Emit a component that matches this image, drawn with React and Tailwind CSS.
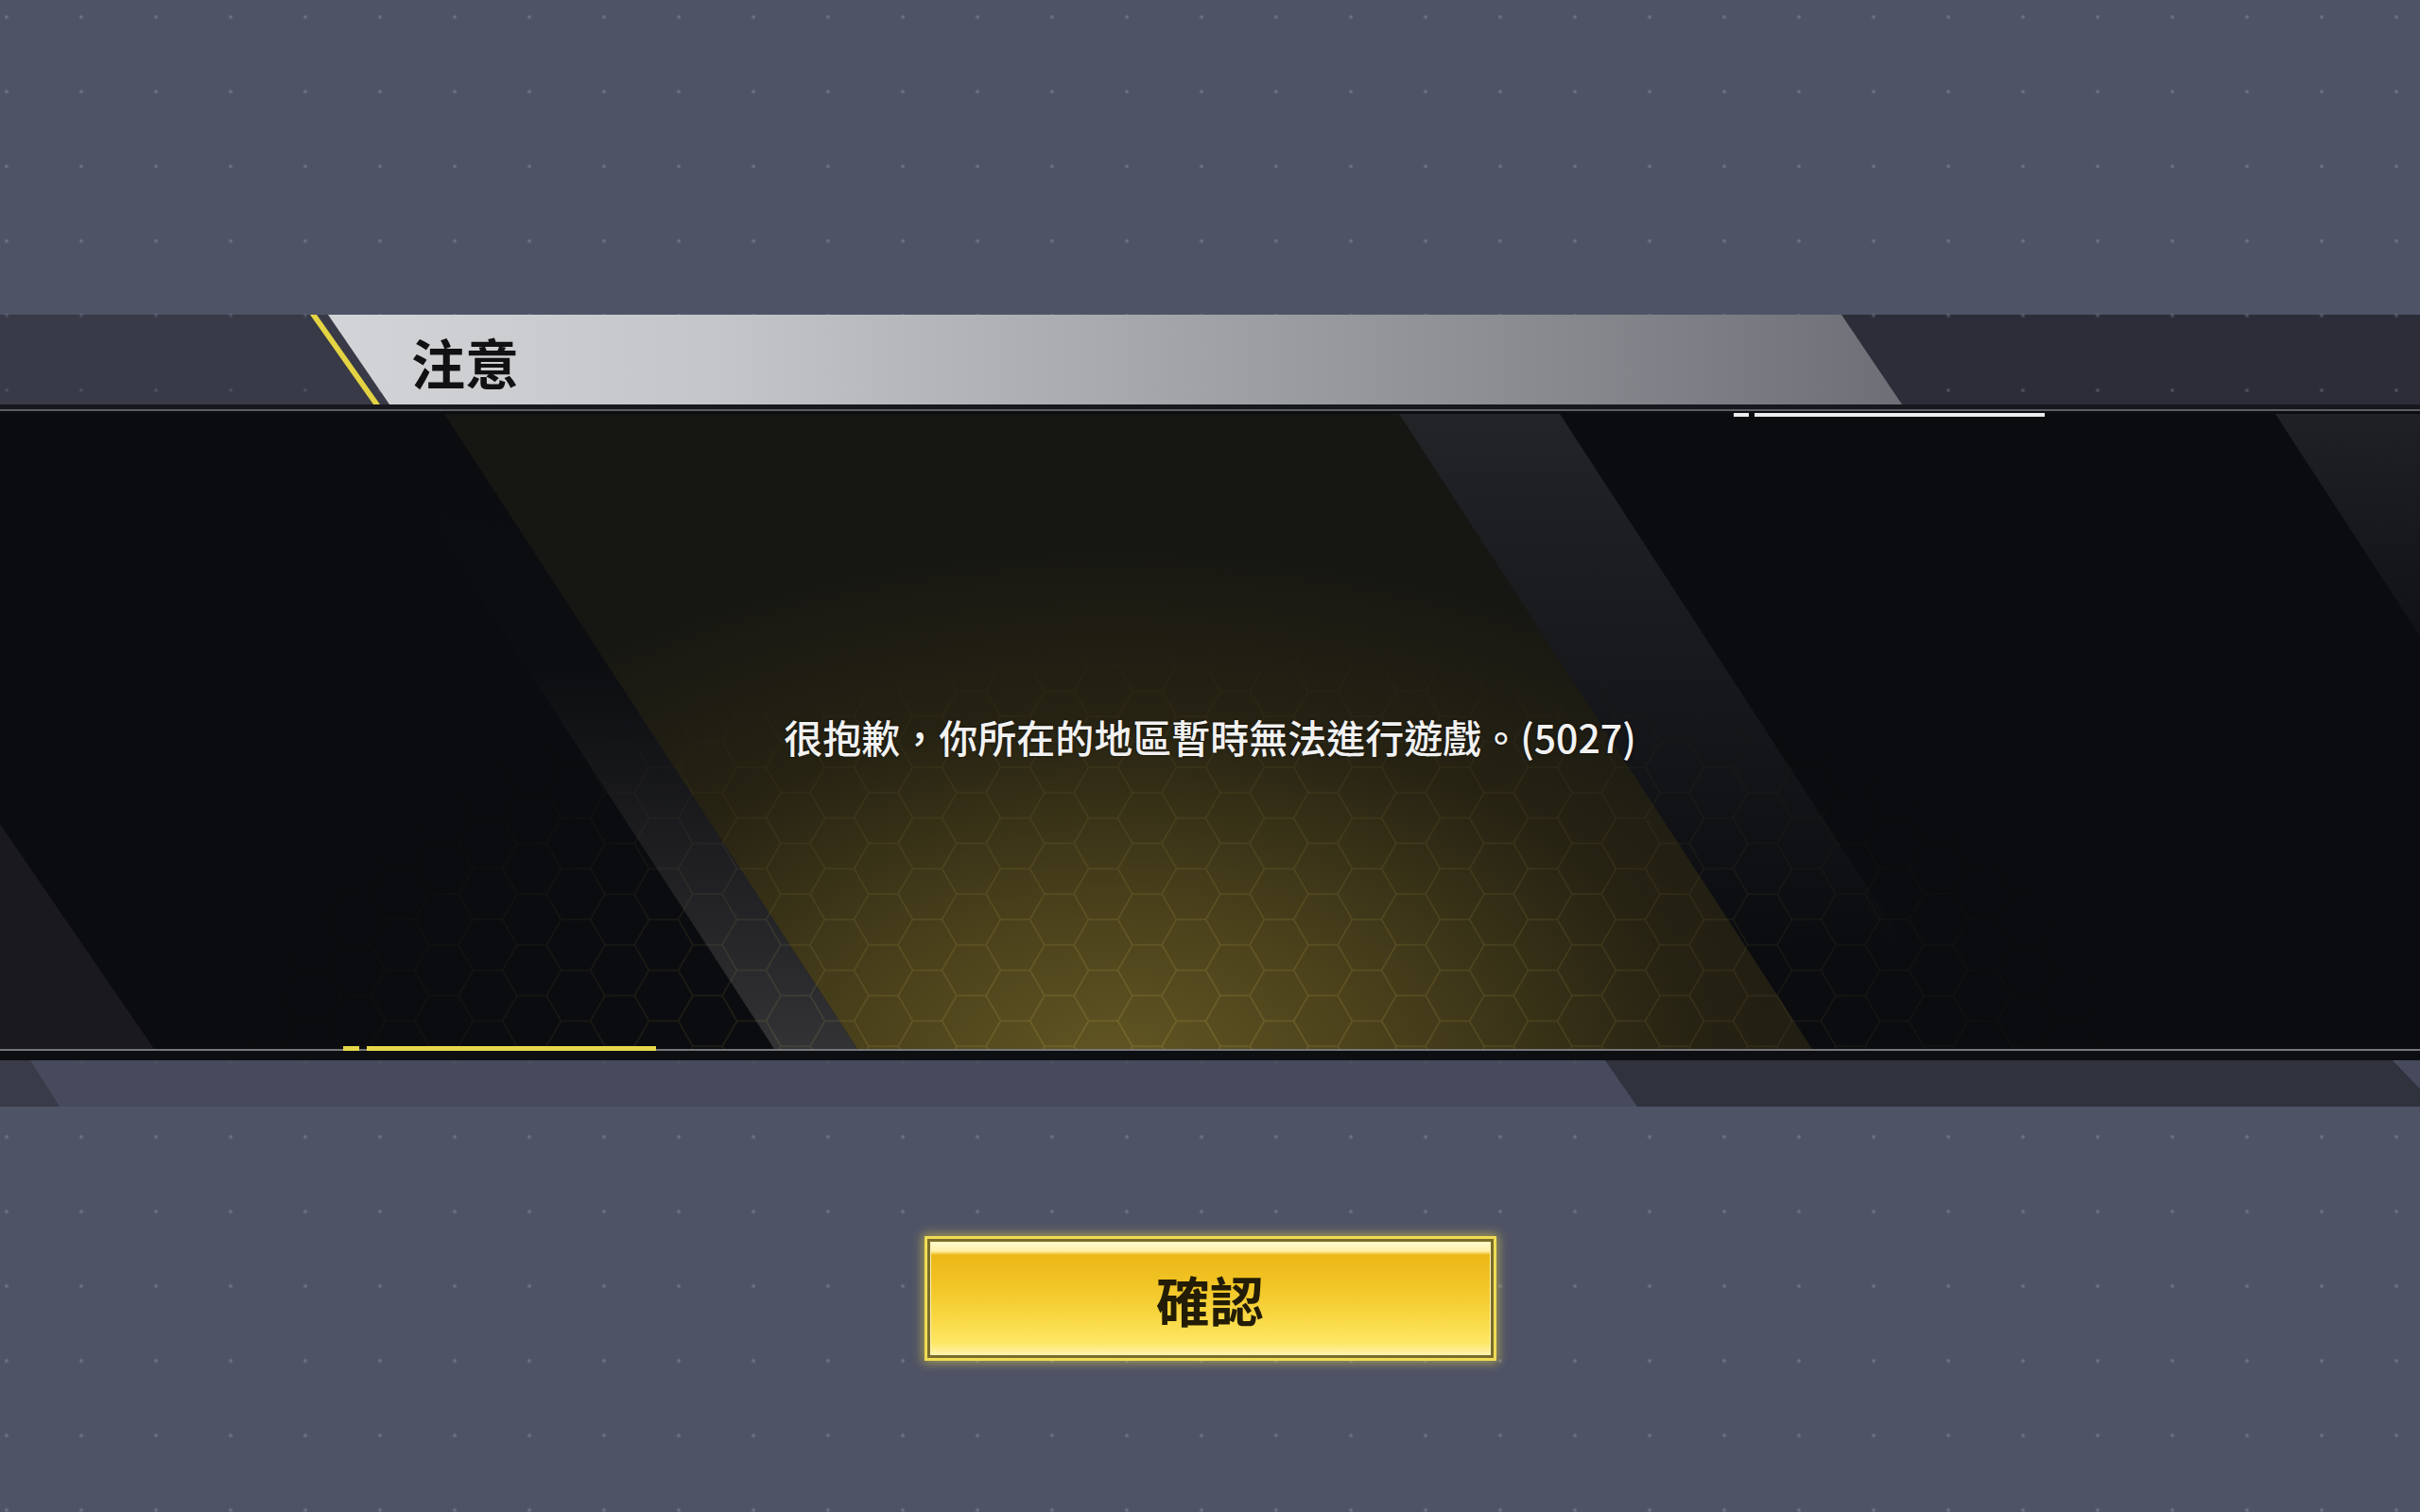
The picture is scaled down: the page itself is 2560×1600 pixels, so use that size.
import React from "react";

const DOTS =
  "bg-fixed bg-[radial-gradient(circle,#6c7085_1.6px,transparent_2.3px)] bg-[length:79px_79px] bg-[position:-32.5px_-21.5px]";
const DOTS_DARK =
  "bg-fixed bg-[radial-gradient(circle,#4d5061_1.6px,transparent_2.3px)] bg-[length:79px_79px] bg-[position:-32.5px_-21.5px]";

const HEX = "M0,26.85 L15.5,0 L46.5,0 L62,26.85 L46.5,53.7 L15.5,53.7 Z M62,26.85 L93,26.85";

function PanelArt() {
  return (
    <svg
      className="col-start-1 row-start-1 block"
      width="2560"
      height="694"
      viewBox="0 0 2560 694"
    >
      <defs>
        <clipPath id="art">
          <rect x="0" y="10" width="2560" height="672" />
        </clipPath>
        <radialGradient
          id="yg"
          gradientUnits="userSpaceOnUse"
          cx="1180"
          cy="700"
          r="720"
          gradientTransform="translate(1180 700) scale(1.3 0.78) translate(-1180 -700)"
        >
          <stop offset="0" stopColor="#625623" />
          <stop offset="0.3" stopColor="#4a411b" />
          <stop offset="0.65" stopColor="#272313" />
          <stop offset="1" stopColor="#161612" />
        </radialGradient>
        <linearGradient id="ls" gradientUnits="userSpaceOnUse" x1="0" y1="10" x2="0" y2="682">
          <stop offset="0" stopColor="#2c2c2f" stopOpacity="0" />
          <stop offset="0.4" stopColor="#2c2c2f" stopOpacity="0.05" />
          <stop offset="0.7" stopColor="#2e2e31" stopOpacity="0.55" />
          <stop offset="1" stopColor="#333336" stopOpacity="1" />
        </linearGradient>
        <linearGradient id="rs" gradientUnits="userSpaceOnUse" x1="0" y1="10" x2="0" y2="682">
          <stop offset="0" stopColor="#232428" stopOpacity="1" />
          <stop offset="0.5" stopColor="#1c1d21" stopOpacity="0.6" />
          <stop offset="0.85" stopColor="#1c1d21" stopOpacity="0" />
        </linearGradient>
        <linearGradient id="fr" gradientUnits="userSpaceOnUse" x1="0" y1="10" x2="0" y2="682">
          <stop offset="0" stopColor="#202125" stopOpacity="1" />
          <stop offset="0.55" stopColor="#1a1b1f" stopOpacity="0" />
        </linearGradient>
        <pattern id="hex" width="93" height="53.7" patternUnits="userSpaceOnUse" x="20" y="8">
          <path d={HEX} fill="none" stroke="#e2cb62" strokeWidth="1.5" />
        </pattern>
        <radialGradient
          id="hmg"
          gradientUnits="userSpaceOnUse"
          cx="1250"
          cy="720"
          r="1000"
          gradientTransform="translate(1250 720) scale(1 0.5) translate(-1250 -720)"
        >
          <stop offset="0" stopColor="#fff" stopOpacity="0.2" />
          <stop offset="0.5" stopColor="#fff" stopOpacity="0.11" />
          <stop offset="0.8" stopColor="#fff" stopOpacity="0.04" />
          <stop offset="1" stopColor="#fff" stopOpacity="0" />
        </radialGradient>
        <mask id="hm" maskUnits="userSpaceOnUse" x="0" y="0" width="2560" height="694">
          <rect x="0" y="0" width="2560" height="694" fill="url(#hmg)" />
        </mask>
      </defs>

      <rect x="0" y="0" width="2560" height="5" fill="#17181d" />
      <rect x="0" y="5" width="2560" height="2" fill="#5d5e64" />
      <rect x="0" y="7" width="2560" height="3" fill="#0c0d10" />

      <g clipPath="url(#art)">
        <rect x="0" y="10" width="2560" height="672" fill="#0b0c0f" />
        <polygon points="0,444 163,682 0,682" fill="#1a1a1e" />
        <polygon points="470,10 1480,10 1917,682 907,682" fill="url(#yg)" />
        <polygon points="382,10 470,10 907,682 819,682" fill="url(#ls)" />
        <polygon points="1480,10 1650,10 2087,682 1917,682" fill="url(#rs)" />
        <polygon points="2407,10 2800,10 3237,682 2844,682" fill="url(#fr)" />
        <rect x="0" y="10" width="2560" height="672" fill="url(#hex)" mask="url(#hm)" />
      </g>

      <rect x="0" y="682" width="2560" height="2" fill="#77777b" />
      <rect x="0" y="684" width="2560" height="10" fill="#0d0e11" />

      <rect x="1834" y="9" width="16" height="4" fill="#ececee" />
      <rect x="1856" y="9" width="307" height="4" fill="#ececee" />
      <rect x="363" y="679" width="17" height="5" fill="#e6d84c" />
      <rect x="388" y="679" width="306" height="5" fill="#e6d84c" />
    </svg>
  );
}

export default function App() {
  return (
    <div
      className={`flex h-[1600px] w-[2560px] flex-col overflow-hidden bg-[#4f5366] ${DOTS} font-['Noto_Sans_CJK_TC','Noto_Sans',sans-serif]`}
    >
      <div className="h-[333px] shrink-0" />

      {/* header band */}
      <div className={`flex h-[95px] shrink-0 bg-[#2c2d38] ${DOTS_DARK}`}>
        <div
          className={`h-full w-[412px] shrink-0 bg-[#383a47] ${DOTS_DARK} [clip-path:polygon(0_0,347px_0,412px_100%,0_100%)]`}
        >
          <svg width="412" height="95" viewBox="0 0 412 95" className="block">
            <polygon points="328,0 335,0 402,95 395,95" fill="#e4d443" />
          </svg>
        </div>
        <div className="-ml-[65px] flex h-full w-[1665px] shrink-0 items-center bg-[linear-gradient(to_right,#d3d4d7_0%,#c4c5c9_25%,#a2a3a8_55%,#86878d_80%,#6e6f76_100%)] pl-[88px] pt-[4px] [clip-path:polygon(0_0,1601px_0,1665px_100%,65px_100%)]">
          <span className="text-[57px] font-bold leading-none text-[#111114]">注意</span>
        </div>
      </div>

      {/* main panel */}
      <div className="grid h-[694px] shrink-0">
        <PanelArt />
        <div className="col-start-1 row-start-1 self-center justify-self-center pt-[8px]">
          <p className="whitespace-nowrap text-[41px] font-medium leading-none text-[#f2f2f2] [text-shadow:0_0_3px_rgba(0,0,0,0.6)]">
            很抱歉，你所在的地區暫時無法進行遊戲。(5027)
          </p>
        </div>
      </div>

      {/* lower band */}
      <div className={`flex h-[49px] shrink-0 bg-[#474a5c] ${DOTS_DARK}`}>
        <div className="h-full w-[63px] shrink-0 bg-[#393b48] [clip-path:polygon(0_0,32px_0,63px_100%,0_100%)]" />
        <div className="ml-[1635px] h-full w-[862px] shrink-0 bg-[#30323e] [clip-path:polygon(0_0,833px_0,880px_100%,34px_100%)]" />
      </div>

      {/* confirm button */}
      <div className="mx-auto mt-[137px] h-[132px] w-[605px] shrink-0 border-[3px] border-[#efdc55] bg-[#7a6c2a] p-[3px] shadow-[0_0_10px_2px_rgba(240,215,70,0.55)]">
        <div className="flex h-full w-full items-center justify-center border border-[#fff4b8] bg-[linear-gradient(to_bottom,#fff8cc_0px,#fff1a6_9px,#ebb818_13px,#f1c323_35%,#f8d640_65%,#fde766_90%,#fff3a8_100%)]">
          <span className="text-[57px] font-bold leading-none text-[#231d06]">確認</span>
        </div>
      </div>
    </div>
  );
}
